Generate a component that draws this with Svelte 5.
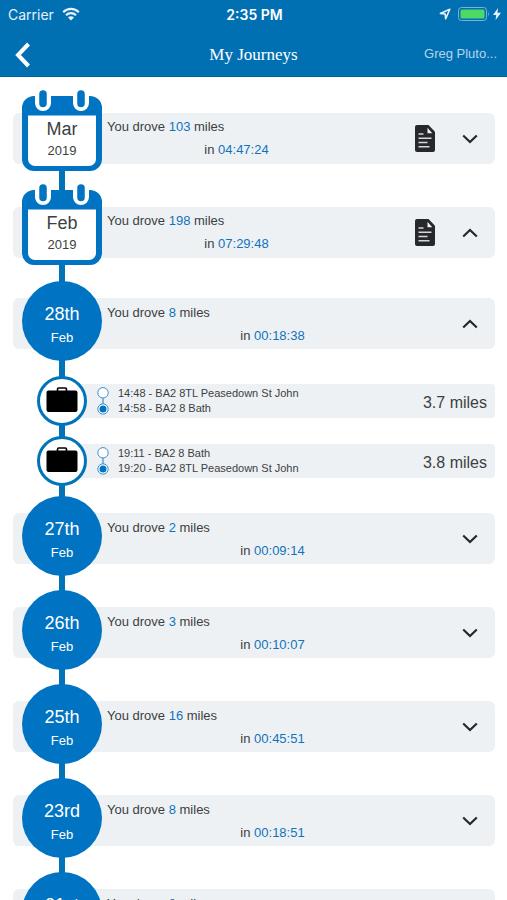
<script>
	const months = [
		{ id: 'mar', label: 'Mar', year: '2019', miles: 103, time: '04:47:24', open: false },
		{ id: 'feb', label: 'Feb', year: '2019', miles: 198, time: '07:29:48', open: true }
	];

	let days = [
		{
			day: '28th',
			month: 'Feb',
			miles: 8,
			time: '00:18:38',
			open: true,
			trips: [
				{ from: '14:48 - BA2 8TL Peasedown St John', to: '14:58 - BA2 8 Bath', distance: '3.7 miles' },
				{ from: '19:11 - BA2 8 Bath', to: '19:20 - BA2 8TL Peasedown St John', distance: '3.8 miles' }
			]
		},
		{ day: '27th', month: 'Feb', miles: 2, time: '00:09:14', open: false, trips: [] },
		{ day: '26th', month: 'Feb', miles: 3, time: '00:10:07', open: false, trips: [] },
		{ day: '25th', month: 'Feb', miles: 16, time: '00:45:51', open: false, trips: [] },
		{ day: '23rd', month: 'Feb', miles: 8, time: '00:18:51', open: false, trips: [] },
		{ day: '21st', month: 'Feb', miles: 8, time: '00:19:02', open: false, trips: [] }
	];

	function toggleDay(item) {
		item.open = !item.open;
		days = days;
	}
</script>

<div class="screen">
	<header>
		<div class="status-bar">
			<div class="carrier">
				<span>Carrier</span>
				<svg width="18" height="14" viewBox="0 0 18 14" aria-hidden="true">
					<path d="M1.2 5.2a11 11 0 0 1 15.6 0M4 8.2a7 7 0 0 1 10 0" fill="none" stroke="currentColor" stroke-width="2.2" />
					<path d="M9 13.4 6 10.4a4.2 4.2 0 0 1 6 0z" fill="currentColor" />
				</svg>
			</div>
			<strong class="clock">2:35 PM</strong>
			<div class="indicators">
				<svg width="12" height="12" viewBox="0 0 12 12" aria-hidden="true">
					<path d="M10.8 1.2 1.4 5.4l4.8.6.5 4.8z" fill="none" stroke="currentColor" stroke-width="1.6" stroke-linejoin="round" />
				</svg>
				<svg width="32" height="14" viewBox="0 0 32 14" aria-hidden="true">
					<rect x="0.5" y="0.5" width="28" height="13" rx="3" fill="none" stroke="#7db2d4" />
					<rect x="2.5" y="2.5" width="24" height="9" rx="1.5" fill="#4cd964" />
					<path d="M30 4.8q1.8 2.2 0 4.4z" fill="#7db2d4" />
				</svg>
				<svg width="8" height="12" viewBox="0 0 8 12" aria-hidden="true">
					<path d="M5 0 0 7h3.2L2.6 12 8 4.8H4.5z" fill="currentColor" />
				</svg>
			</div>
		</div>
		<nav>
			<button class="back" aria-label="Back">
				<svg width="16" height="26" viewBox="0 0 16 26" aria-hidden="true">
					<path d="M13.5 2 3 13l10.5 11" fill="none" stroke="#fff" stroke-width="4" />
				</svg>
			</button>
			<h1>My Journeys</h1>
			<span class="user">Greg Pluto...</span>
		</nav>
	</header>

	<main>
		<div class="timeline">
			{#each months as item (item.id)}
				<section class="entry">
					<div class="card month-card">
						{@render summary(item)}
						<button class="report" aria-label="{item.label} report">
							<svg width="20" height="27" viewBox="0 0 20 27" aria-hidden="true">
								<path d="M2 0h11.5L20 6.8V25a2 2 0 0 1-2 2H2a2 2 0 0 1-2-2V2a2 2 0 0 1 2-2z" fill="#26282b" />
								<path d="M12.5 2.8v5.4h4.8z" fill="#edf1f4" />
								<path d="M3.5 9h5M3.5 13.2h13M3.5 17.4h9M3.5 21.8h11" stroke="#d4d8db" stroke-width="1.5" />
							</svg>
						</button>
						<button class="toggle" aria-label="Toggle {item.label}" aria-expanded={item.open}>
							{@render chevron(item.open)}
						</button>
					</div>
					<div class="badge calendar">
						<svg class="calendar-frame" width="80" height="80" viewBox="0 0 80 80" aria-hidden="true">
							<rect x="0" y="5" width="80" height="75" rx="12" fill="#0073c2" />
							<path d="M6 24.5h68V68a7 7 0 0 1-7 7H13a7 7 0 0 1-7-7z" fill="#fff" />
							<path d="M21 5v7M59 5v7" stroke="#fff" stroke-width="16" stroke-linecap="round" />
							<path d="M21 3v9.5M59 3v9.5" stroke="#0073c2" stroke-width="7.5" stroke-linecap="round" />
						</svg>
						<div class="calendar-text">
							<span class="big">{item.label}</span>
							<span class="small">{item.year}</span>
						</div>
					</div>
				</section>
			{/each}

			<div class="days">
				{#each days as item (item.day)}
					<section class="entry">
						<div class="card">
							{@render summary(item)}
							<button class="toggle" aria-label="Toggle {item.day}" aria-expanded={item.open} onclick={() => toggleDay(item)}>
								{@render chevron(item.open)}
							</button>
						</div>
						<div class="badge circle">
							<span class="big">{item.day}</span>
							<span class="small">{item.month}</span>
						</div>
					</section>

					{#if item.open && item.trips.length}
						<div class="trips">
							{#each item.trips as trip}
								<div class="trip">
									<div class="trip-card">
										<svg width="12" height="28" viewBox="0 0 12 28" aria-hidden="true">
											<path d="M6 11v6" stroke="#3d90cc" stroke-width="1.2" />
											<circle cx="6" cy="5.8" r="5.2" fill="#fff" stroke="#3d90cc" />
											<circle cx="6" cy="22" r="5.2" fill="#fff" stroke="#3d90cc" />
											<circle cx="6" cy="22" r="3.5" fill="#0073c2" />
										</svg>
										<div class="stops">
											<span>{trip.from}</span>
											<span>{trip.to}</span>
										</div>
										<span class="distance">{trip.distance}</span>
									</div>
									<div class="trip-icon">
										<svg width="32" height="26" viewBox="0 0 32 26" aria-hidden="true">
											<path d="M11.5 4V2.2Q11.5 1 12.7 1h6.6q1.2 0 1.2 1.2V4" fill="none" stroke="#000" stroke-width="1.6" />
											<rect x="0.5" y="3.5" width="31" height="21.5" rx="2" />
										</svg>
									</div>
								</div>
							{/each}
						</div>
					{/if}
				{/each}
			</div>
		</div>
	</main>
</div>

{#snippet summary(item)}
	<div class="summary">
		<p>You drove <b>{item.miles}</b> miles</p>
		<p class="duration">in <b>{item.time}</b></p>
	</div>
{/snippet}

{#snippet chevron(up)}
	<svg class:up width="16" height="10" viewBox="0 0 16 10" aria-hidden="true">
		<path d="M1.2 1.5 8 8l6.8-6.5" fill="none" stroke="#26282b" stroke-width="2.2" />
	</svg>
{/snippet}

<style>
	:global(body) {
		margin: 0;
		background: #fff;
	}

	.screen {
		display: flex;
		flex-direction: column;
		height: 100vh;
		overflow: hidden;
		font-family: 'Liberation Sans', Arial, sans-serif;
		font-size: 13px;
		color: #3c3f42;
	}

	button {
		display: flex;
		align-items: center;
		justify-content: center;
		padding: 0;
		border: none;
		background: none;
		cursor: pointer;
	}

	/* Header */
	header {
		flex: none;
		background: #0070b3;
		border-bottom: 1px solid #00629e;
		color: #fff;
	}

	.status-bar {
		display: grid;
		grid-template-columns: 1fr auto 1fr;
		align-items: center;
		height: 28px;
		padding: 0 6px 0 8px;
		font-family: Inter, sans-serif;
		font-size: 14px;
	}

	.carrier,
	.indicators {
		display: flex;
		align-items: center;
		gap: 8px;
		color: #e6f1f8;
	}

	.indicators {
		justify-content: flex-end;
		gap: 7px;
	}

	.indicators svg:last-child {
		margin-left: -4px;
	}

	.clock {
		font-weight: 600;
	}

	nav {
		display: grid;
		grid-template-columns: 1fr auto 1fr;
		align-items: center;
		height: 48px;
		padding: 0 10px;
	}

	.back {
		justify-self: start;
		padding: 6px 0 0 5px;
	}

	h1 {
		margin: 0;
		padding-top: 6px;
		font-family: 'Liberation Serif', 'Times New Roman', serif;
		font-size: 17px;
		font-weight: 400;
	}

	.user {
		justify-self: end;
		padding-top: 3px;
		color: #b5d5ea;
	}

	/* Timeline */
	main {
		flex: 1;
		min-height: 0;
		overflow-y: auto;
		scrollbar-width: none;
	}

	.timeline {
		position: relative;
		padding: 14px 12px 14px 13px;
	}

	.timeline::before {
		content: '';
		position: absolute;
		top: 60px;
		bottom: 60px;
		left: 59px;
		width: 6px;
		background: #0073b9;
		z-index: 1;
	}

	.days {
		padding-top: 2px;
	}

	.entry {
		display: grid;
		grid-template-columns: 9px 80px 1fr;
		margin-bottom: 14px;
	}

	.card {
		grid-area: 1 / 1 / 2 / 4;
		align-self: start;
		display: flex;
		margin-top: 17px;
		padding-left: 94px;
		border-radius: 6px;
		background: #edf1f4;
	}

	.month-card {
		margin-top: 22px;
	}

	.summary {
		flex: 1;
		padding: 3px 0 2px;
		line-height: 23px;
	}

	.month-card .summary {
		padding: 2px 0 3px;
	}

	.summary p {
		margin: 0;
	}

	.summary .duration {
		text-align: center;
	}

	.summary b {
		font-weight: 400;
		color: #1273bd;
	}

	.report {
		justify-content: flex-end;
		width: 72px;
		padding-right: 3px;
	}

	.toggle {
		width: 50px;
		margin-left: 7px;
	}

	.up {
		transform: rotate(180deg);
	}

	.badge {
		grid-area: 1 / 2;
		height: 80px;
		z-index: 2;
		line-height: 23px;
		text-align: center;
	}

	.big,
	.small {
		display: block;
	}

	.big {
		font-size: 18px;
	}

	.circle {
		box-sizing: border-box;
		padding-top: 22px;
		border-radius: 50%;
		background: #0073c2;
		color: #fff;
	}

	.calendar {
		display: grid;
	}

	.calendar-frame,
	.calendar-text {
		grid-area: 1 / 1;
	}

	.calendar-frame {
		overflow: visible;
	}

	.calendar-text {
		padding-top: 27px;
		line-height: 22px;
		z-index: 1;
	}

	/* Trips */
	.trips {
		display: grid;
		gap: 10px;
		padding: 1px 0 10px;
	}

	.trip {
		display: grid;
		grid-template-columns: 24px 50px 1fr;
		align-items: center;
	}

	.trip-card {
		grid-area: 1 / 2 / 2 / 4;
		display: flex;
		align-items: center;
		height: 34px;
		margin-left: 24px;
		padding: 0 8px 0 36px;
		border-radius: 0 4px 4px 0;
		background: #edf1f4;
	}

	.stops {
		display: grid;
		flex: 1;
		padding-left: 9px;
		font-size: 11px;
		line-height: 15px;
	}

	.distance {
		padding-top: 3px;
		font-size: 16px;
	}

	.trip-icon {
		grid-area: 1 / 2;
		box-sizing: border-box;
		display: flex;
		align-items: center;
		justify-content: center;
		height: 50px;
		padding-bottom: 2px;
		border: 3px solid #0073b9;
		border-radius: 50%;
		background: #fff;
		z-index: 2;
	}
</style>
